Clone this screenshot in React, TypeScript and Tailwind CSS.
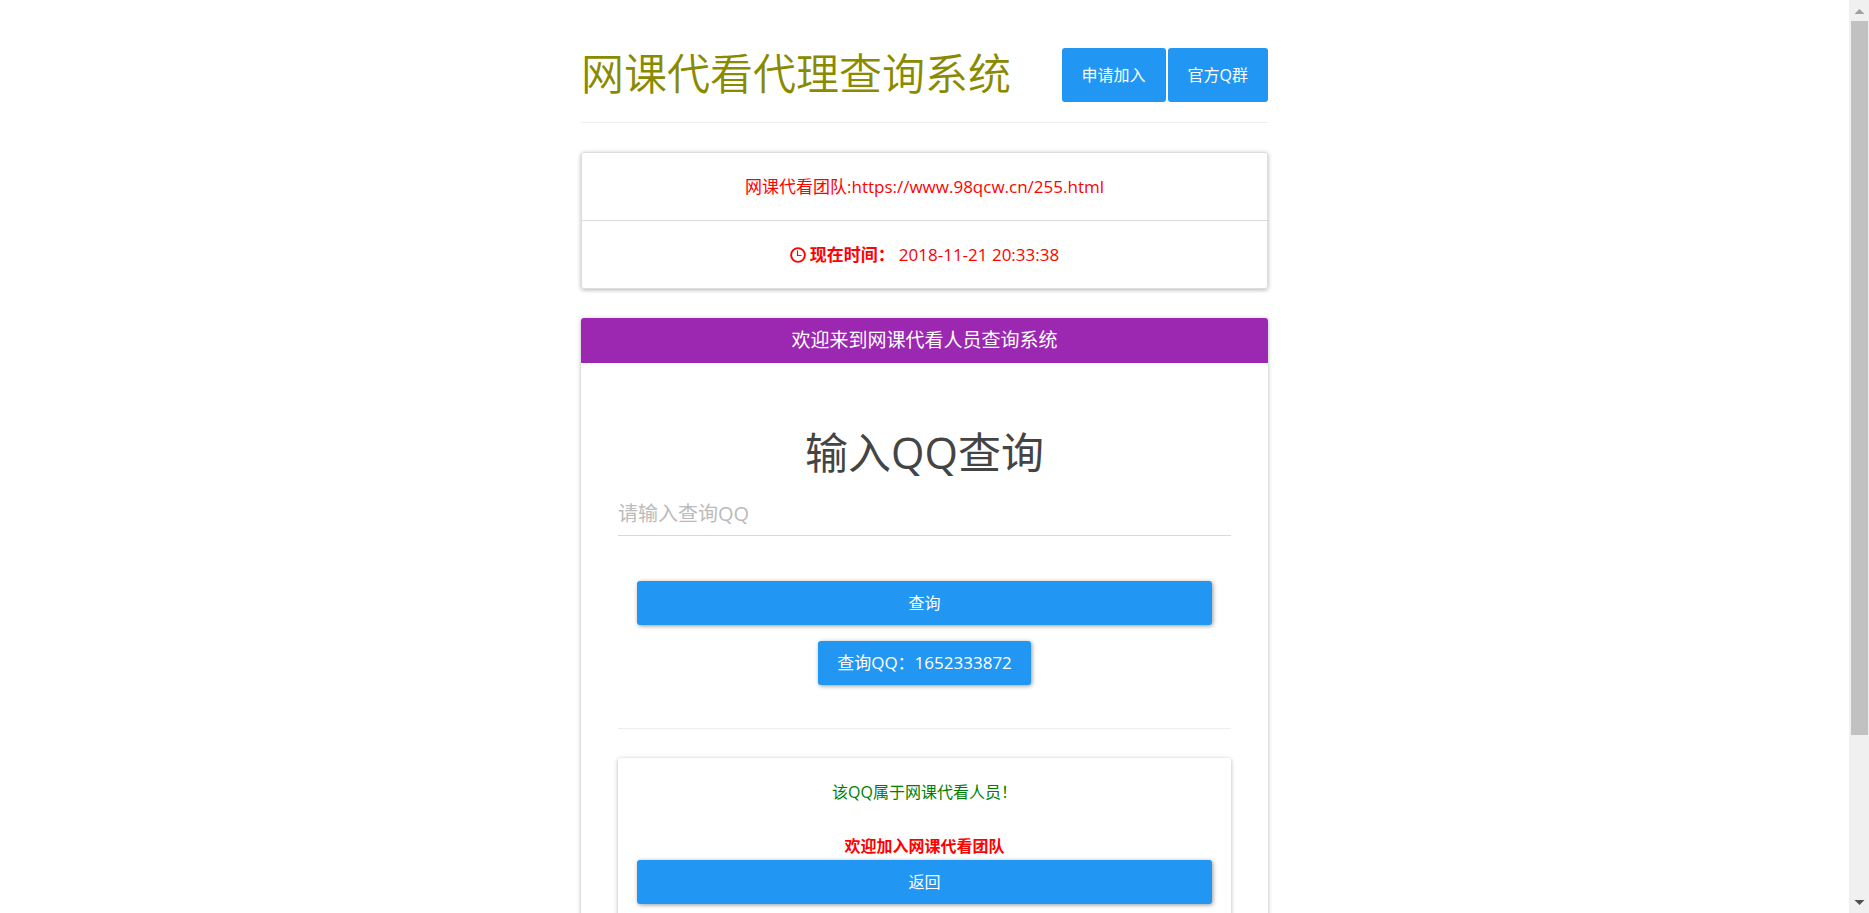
import React from 'react';

const noticeUrl = 'https://www.98qcw.cn/255.html';

const buttonClass =
  'h-11 rounded-[3px] bg-[#2196f3] px-[19px] text-white shadow-[1px_1px_4px_rgba(0,0,0,0.4)]';

const ClockIcon = () => (
  <svg viewBox="0 0 16 16" className="h-4 w-4" fill="none" stroke="currentColor" aria-hidden="true">
    <circle cx="8" cy="8" r="6.9" strokeWidth="1.9" />
    <path d="M7.5 3.5v5h4" strokeWidth="1.2" />
  </svg>
);

const Header = () => (
  <header className="flex items-start justify-between border-b border-[#eeeeee] pb-5">
    <h1 className="text-[43px] leading-[52px] font-[350] text-[#8a8a00]">网课代看代理查询系统</h1>
    <nav className="flex gap-0.5">
      <a href="#join" className="rounded-[3px] bg-[#2196f3] px-5 py-[15px] leading-6 text-white">
        申请加入
      </a>
      <a href="#group" className="rounded-[3px] bg-[#2196f3] px-5 py-[15px] leading-6 text-white">
        官方Q群
      </a>
    </nav>
  </header>
);

const Notice = () => (
  <ul className="mt-[29px] divide-y divide-[#dddddd] rounded-[3px] border border-[#dddddd] text-center text-[17px] text-[#ff0000] shadow-[0_1px_4px_rgba(0,0,0,0.3)]">
    <li className="px-5 pt-[22px] pb-[21px] leading-6">
      网课代看团队:{noticeUrl}
    </li>
    <li className="flex items-center justify-center px-5 pt-[22px] pb-[21px] leading-6">
      <ClockIcon />
      <b className="ml-1">现在时间：</b>
      <span className="ml-1">2018-11-21 20:33:38</span>
    </li>
  </ul>
);

const Result = () => (
  <div className="mt-[29px] rounded-[3px] px-[19px] pt-[22px] pb-5 text-center shadow-[0_1px_4px_rgba(0,0,0,0.3)]">
    <p className="leading-6 text-[#008000]">该QQ属于网课代看人员！</p>
    <p className="mt-[30px] leading-6 font-bold text-[#ff0000]">欢迎加入网课代看团队</p>
    <button type="button" className={`${buttonClass} mt-0.5 w-full text-base`}>
      返回
    </button>
  </div>
);

const QueryPanel = () => (
  <section className="mt-[29px] rounded-[3px] shadow-[0_1px_4px_rgba(0,0,0,0.3)]">
    <h2 className="rounded-t-[3px] bg-[#9c27b0] text-center text-[19px] leading-[45px] text-white">
      欢迎来到网课代看人员查询系统
    </h2>
    <div className="px-[37px] pt-16 pb-10">
      <form onSubmit={(e) => e.preventDefault()}>
        <label htmlFor="qq" className="block text-center text-[43px] leading-[52px] text-[#444444]">
          输入QQ查询
        </label>
        <input
          id="qq"
          type="text"
          placeholder="请输入查询QQ"
          className="mt-3.5 h-[43px] w-full border-b border-[#d8d8d8] pb-0.5 text-xl text-[#666666] outline-none placeholder:text-[#bbbbbb]"
        />
        <div className="mt-[45px] flex flex-col items-center gap-4 px-[19px]">
          <button type="submit" className={`${buttonClass} w-full text-base`}>
            查询
          </button>
          <button type="button" className={`${buttonClass} text-[17px]`}>
            查询QQ：1652333872
          </button>
        </div>
      </form>
      <hr className="mt-[43px] border-[#eeeeee]" />
      <Result />
    </div>
  </section>
);

const Scrollbar = () => (
  <div className="flex w-5 shrink-0 flex-col bg-[#f0f0f0]" aria-hidden="true">
    <div className="flex h-full w-full flex-col items-center">
      <svg viewBox="0 0 20 21" className="h-[21px] w-5 shrink-0">
        <path d="M5.5 14h10l-5-5z" fill="#a0a0a0" />
      </svg>
      <div className="h-4/5 w-[17px] bg-[#c1c1c1]" />
    </div>
    <svg viewBox="0 0 20 21" className="h-[21px] w-5 shrink-0">
      <path d="M5.5 8h10l-5 5z" fill="#505050" />
    </svg>
  </div>
);

const App = () => {
  return (
    <div className="flex h-screen bg-white font-['Open_Sans','Noto_Sans_CJK_SC',sans-serif] text-base">
      <div className="flex-1 overflow-hidden">
        <main className="mx-auto max-w-[687px] pt-12">
          <Header />
          <Notice />
          <QueryPanel />
        </main>
      </div>
      <Scrollbar />
    </div>
  );
};

export default App;
